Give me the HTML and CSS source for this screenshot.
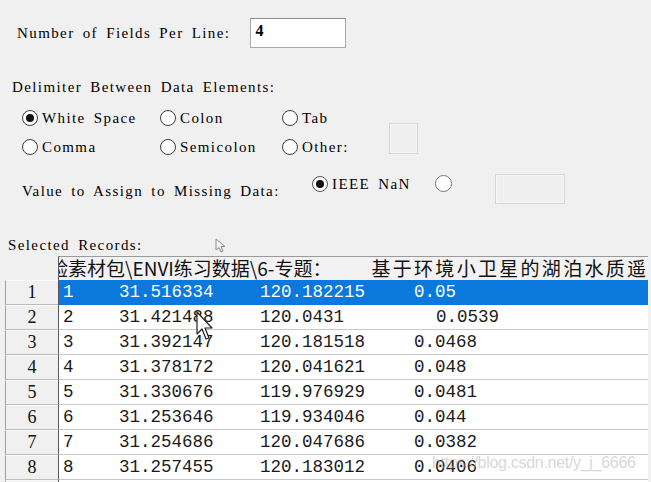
FILE: index.html
```html
<!DOCTYPE html>
<html>
<head>
<meta charset="utf-8">
<link rel="stylesheet" href="styles.css">
</head>
<body>
<div class="page">
  <div class="fields-row">
    <span class="lbl">Number of Fields Per Line:</span>
    <div class="txt-input">4</div>
  </div>

  <div class="lbl delim-title">Delimiter Between Data Elements:</div>

  <div class="radio-grid">
    <div class="radio on"><span class="dot"></span><span class="lbl">White Space</span></div>
    <div class="radio"><span class="dot"></span><span class="lbl">Colon</span></div>
    <div class="radio"><span class="dot"></span><span class="lbl">Tab</span></div>
    <div class="box other-box"></div>
    <div class="radio"><span class="dot"></span><span class="lbl">Comma</span></div>
    <div class="radio"><span class="dot"></span><span class="lbl">Semicolon</span></div>
    <div class="radio"><span class="dot"></span><span class="lbl">Other:</span></div>
  </div>

  <div class="missing-row">
    <span class="lbl">Value to Assign to Missing Data:</span>
    <div class="radio on nan"><span class="dot"></span><span class="lbl">IEEE NaN</span></div>
    <div class="radio value-radio"><span class="dot"></span></div>
    <div class="box value-box"></div>
  </div>

  <div class="lbl sel-title">Selected Records:</div>

  <div class="table">
    <div class="tr head">
      <div class="rn blank"></div>
      <div class="thead"><span class="h1">验素材包\ENVI练习数据\6-专题：</span><span class="h2">基于环境小卫星的湖泊水质遥感</span></div>
    </div>
    <div class="tr sel">
      <div class="rn">1</div>
      <div class="cells"><span>1</span><span>31.516334</span><span>120.182215</span><span>0.05</span></div>
    </div>
    <div class="tr">
      <div class="rn">2</div>
      <div class="cells"><span>2</span><span>31.421488</span><span>120.0431</span><span class="off">0.0539</span></div>
    </div>
    <div class="tr">
      <div class="rn">3</div>
      <div class="cells"><span>3</span><span>31.392147</span><span>120.181518</span><span>0.0468</span></div>
    </div>
    <div class="tr">
      <div class="rn">4</div>
      <div class="cells"><span>4</span><span>31.378172</span><span>120.041621</span><span>0.048</span></div>
    </div>
    <div class="tr">
      <div class="rn">5</div>
      <div class="cells"><span>5</span><span>31.330676</span><span>119.976929</span><span>0.0481</span></div>
    </div>
    <div class="tr">
      <div class="rn">6</div>
      <div class="cells"><span>6</span><span>31.253646</span><span>119.934046</span><span>0.044</span></div>
    </div>
    <div class="tr">
      <div class="rn">7</div>
      <div class="cells"><span>7</span><span>31.254686</span><span>120.047686</span><span>0.0382</span></div>
    </div>
    <div class="tr">
      <div class="rn">8</div>
      <div class="cells"><span>8</span><span>31.257455</span><span>120.183012</span><span>0.0406</span></div>
    </div>
    <div class="tr">
      <div class="rn">9</div>
      <div class="cells"><span>9</span><span>31.271904</span><span>119.987015</span><span>0.0407</span></div>
    </div>
  </div>

  <svg class="cursor cursor-main" width="18" height="30" viewBox="0 0 18 30">
    <path d="M1 1 L1 23 L6 18 L10 28 L13 27 L9 17 L16 17 Z" fill="#fff" stroke="#222" stroke-width="1.2" stroke-linejoin="round"/>
  </svg>
  <svg class="cursor cursor-faint" width="12" height="16" viewBox="0 0 12 16">
    <path d="M1 1 L1 12 L4 9.5 L6 14 L8 13 L6 8.5 L10 8.5 Z" fill="#f4f4f4" stroke="#8a8a8a" stroke-width="1"/>
  </svg>
  <div class="watermark">https://blog.csdn.net/y_j_6666</div>
</div>
</body>
</html>
```

FILE: styles.css
```css
html, body {
  margin: 0;
  padding: 0;
  background: #f0f0f0;
  overflow: hidden;
}
.page {
  position: relative;
  width: 651px;
  height: 482px;
  overflow: hidden;
  font-family: "Liberation Serif", serif;
  color: #000;
}
.lbl {
  font-family: "Liberation Serif", serif;
  font-size: 15px;
  letter-spacing: 1.4px;
  word-spacing: 3px;
  line-height: 16px;
  white-space: pre;
  color: #000;
}

.fields-row {
  display: flex;
  align-items: center;
  padding: 18px 0 0 17px;
}
.txt-input {
  margin-left: 20px;
  height: 28px;
  box-sizing: content-box;
  border: 1px solid #a9a9a9;
  border-top-color: #8c8c8c;
  background: #fff;
  font-family: "Liberation Serif", serif;
  font-size: 16px;
  font-weight: bold;
  line-height: 24px;
  padding-left: 4px;
  width: 90px;
}

.delim-title {
  margin: 31px 0 0 12px;
}

.radio-grid {
  display: grid;
  grid-template-columns: 138px 122px 107px auto;
  grid-template-rows: 29px 29px;
  margin-top: 8px;
  padding-left: 22px;
}
.radio {
  display: flex;
  align-items: center;
}
.dot {
  width: 14px;
  height: 14px;
  border: 1px solid #3c3c3c;
  border-radius: 50%;
  background: #fff;
  position: relative;
  flex: none;
  margin-right: 4px;
}
.radio.on .dot::after {
  content: "";
  position: absolute;
  left: 3px;
  top: 3px;
  width: 8px;
  height: 8px;
  border-radius: 50%;
  background: #111;
}
.box {
  border: 1px solid #d6d6d6;
  box-shadow: inset 0 0 0 1px #f7f7f7;
  background: #efefef;
}
.other-box {
  grid-column: 4;
  grid-row: 1 / span 2;
  align-self: end;
  width: 27px;
  height: 29px;
  margin-bottom: 7px;
}

.missing-row {
  display: grid;
  grid-template-columns: 290px 123px 60px auto;
  align-items: center;
  margin-top: 13px;
  padding-left: 22px;
  height: 30px;
}
.missing-row > .lbl {
  margin-top: 3px;
}
.nan {
  align-self: start;
  margin-top: 2px;
}
.nan .dot {
  border-color: #555;
}
.value-radio {
  align-self: start;
  margin-top: 1px;
}
.value-radio .dot {
  width: 15px;
  height: 15px;
  border-color: #777;
}
.value-box {
  width: 68px;
  height: 28px;
}

.sel-title {
  margin: 33px 0 0 8px;
}

.table {
  margin: 3px 3px 0 5px;
}
.tr {
  display: flex;
  height: 25px;
}
.tr.head {
  height: 24px;
}
.rn {
  width: 53px;
  flex: none;
  box-sizing: border-box;
  background: #f0f0f0;
  border-left: 1px solid #a0a0a0;
  border-top: 1px solid #fbfbfb;
  border-bottom: 1px solid #bcbcbc;
  text-align: center;
  font-family: "Liberation Serif", serif;
  font-size: 18px;
  line-height: 23px;
  color: #111;
}
.rn.blank {
  border: none;
  background: transparent;
}
.thead {
  flex: 1;
  min-width: 0;
  overflow: hidden;
  white-space: nowrap;
  box-sizing: border-box;
  border-top: 1px solid #9a9a9a;
  border-left: 1px solid #5a5a5a;
  background: #f2f2f2;
  font-family: "Noto Sans CJK SC", "Noto Sans", sans-serif;
  font-size: 19px;
  line-height: 22px;
  color: #111;
  display: flex;
}
.h1 {
  margin-left: -10px;
  flex: none;
}
.h2 {
  margin-left: 40px;
  letter-spacing: 2.3px;
  flex: none;
}
.cells {
  flex: 1;
  min-width: 0;
  box-sizing: border-box;
  border-left: 1px solid #5a5a5a;
  border-bottom: 1px solid #c8c8c8;
  background: #fff;
  display: grid;
  grid-template-columns: 56px 141px 154px auto;
  padding-left: 4px;
  font-family: "Liberation Mono", monospace;
  font-size: 17.5px;
  line-height: 24px;
  color: #1a1a1a;
  white-space: nowrap;
}
.tr.sel .cells {
  background: #0a78dc;
  color: #fff;
  border-bottom-color: #0a78dc;
}
.off {
  padding-left: 22px;
}

.cursor {
  position: absolute;
}
.cursor-main {
  left: 196px;
  top: 311px;
}
.cursor-faint {
  left: 215px;
  top: 238px;
}
.watermark {
  position: absolute;
  left: 432px;
  top: 454px;
  font-family: "Liberation Sans", sans-serif;
  font-size: 16px;
  letter-spacing: -0.3px;
  color: rgba(175, 175, 175, 0.5);
  white-space: nowrap;
}
```
